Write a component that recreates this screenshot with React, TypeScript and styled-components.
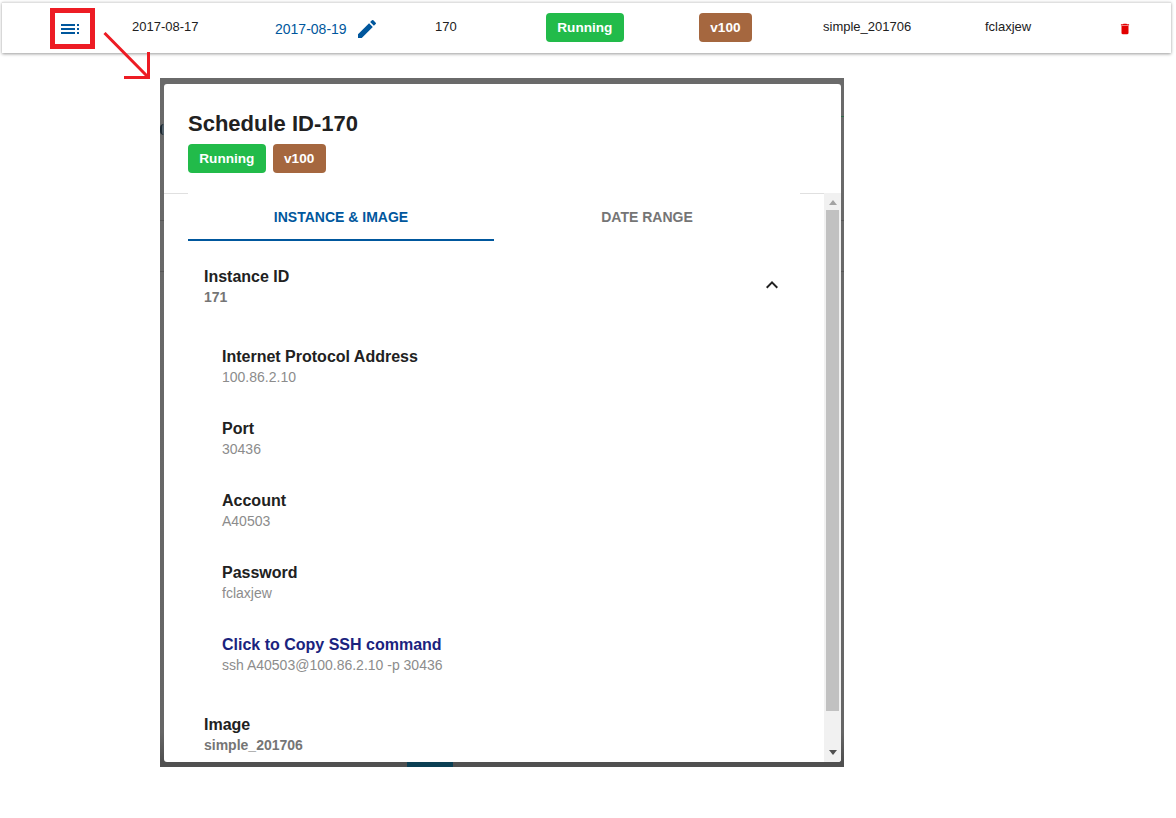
import styled, { createGlobalStyle } from 'styled-components';
import { MdToc, MdEdit, MdDelete, MdExpandLess } from 'react-icons/md';

const GlobalStyle = createGlobalStyle`
  html, body {
    margin: 0;
    padding: 0;
    background: #fff;
    font-family: "Liberation Sans", Arial, sans-serif;
  }
`;

const connectionFields = [
  { label: 'Internet Protocol Address', value: '100.86.2.10' },
  { label: 'Port', value: '30436' },
  { label: 'Account', value: 'A40503' },
  { label: 'Password', value: 'fclaxjew' },
];

export default function App() {
  return (
    <>
      <GlobalStyle />
      <Page>
        <ScheduleRow>
          <MenuCell>
            <MenuButton>
              <MdToc size={24} />
            </MenuButton>
          </MenuCell>
          <RowText>2017-08-17</RowText>
          <EndDate>
            2017-08-19
            <MdEdit size={24} />
          </EndDate>
          <RowText>170</RowText>
          <BadgeCell>
            <Badge $color="#22bb4a">Running</Badge>
          </BadgeCell>
          <BadgeCell>
            <Badge $color="#a5673f">v100</Badge>
          </BadgeCell>
          <RowText>simple_201706</RowText>
          <RowText>fclaxjew</RowText>
          <DeleteCell>
            <MdDelete size={14} />
          </DeleteCell>
        </ScheduleRow>

        <Arrow width="50" height="50" viewBox="0 0 50 50">
          <path d="M1.5 1 L45 45 M21 45.5 H45.5 V20" />
        </Arrow>

        <Modal>
          {/* bits of the page behind the dialog that show through its frame */}
          <BehindArc />
          <BehindButton />
          <FrameTick $side="left" $top={142} />
          <FrameTick $side="left" $top={193} />
          <FrameTick $side="right" $top={38} $color="#2f6b4a" />
          <FrameTick $side="right" $top={142} />
          <FrameTick $side="right" $top={193} />
          <ModalSheet>
            <ModalHeader>
              <ModalTitle>Schedule ID-170</ModalTitle>
              <BadgeRow>
                <Badge $color="#22bb4a">Running</Badge>
                <Badge $color="#a5673f">v100</Badge>
              </BadgeRow>
            </ModalHeader>
            <ModalBody>
              <ModalContent>
                <Tabs>
                  <Tab $active>INSTANCE &amp; IMAGE</Tab>
                  <Tab>DATE RANGE</Tab>
                </Tabs>
                <AccordionHead>
                  <div>
                    <HeadLabel>Instance ID</HeadLabel>
                    <HeadValue>171</HeadValue>
                  </div>
                  <MdExpandLess size={24} />
                </AccordionHead>
                <FieldList>
                  {connectionFields.map((field) => (
                    <div key={field.label}>
                      <FieldLabel>{field.label}</FieldLabel>
                      <FieldValue>{field.value}</FieldValue>
                    </div>
                  ))}
                  <div>
                    <FieldLabel $link>Click to Copy SSH command</FieldLabel>
                    <FieldValue>ssh A40503@100.86.2.10 -p 30436</FieldValue>
                  </div>
                </FieldList>
                <ImageItem>
                  <HeadLabel>Image</HeadLabel>
                  <HeadValue>simple_201706</HeadValue>
                </ImageItem>
              </ModalContent>
              <ScrollBar>
                <ScrollUp />
                <ScrollThumb />
                <ScrollDown />
              </ScrollBar>
            </ModalBody>
          </ModalSheet>
        </Modal>
      </Page>
    </>
  );
}

const Page = styled.div`
  position: relative;
  height: 818px;
  overflow: hidden;
  padding-top: 2px;
  box-sizing: border-box;
`;

const ScheduleRow = styled.div`
  display: grid;
  grid-template-columns: 130px 143px 160px 111px 153px 124px 162px 133px 1fr;
  align-items: center;
  height: 51px;
  box-sizing: border-box;
  margin: 0 5px 0 2px;
  border-top: 1px solid #e0e0e0;
  background: #fff;
  box-shadow: 0 1px 3px rgba(0, 0, 0, 0.4);
  color: #212121;
  font-size: 13px;
`;

const MenuCell = styled.div`
  padding-left: 48px;
`;

const MenuButton = styled.div`
  display: flex;
  align-items: center;
  justify-content: center;
  width: 45px;
  height: 41px;
  box-sizing: border-box;
  padding: 1px 5px 0 0;
  border: 5px solid #ed1c24;
  color: #00579d;
`;

const RowText = styled.div`
  padding-bottom: 3px;
`;

const EndDate = styled.div`
  display: flex;
  align-items: center;
  gap: 8px;
  padding-top: 2px;
  color: #00579d;
  font-size: 14px;
`;

const BadgeCell = styled.div`
  display: flex;
  padding-bottom: 1px;
`;

const DeleteCell = styled.div`
  display: flex;
  padding-top: 2px;
  color: #e30000;
`;

const Badge = styled.span<{ $color: string }>`
  display: inline-block;
  height: 29px;
  padding: 0 11.3px;
  border-radius: 4px;
  background: ${(props) => props.$color};
  color: #fff;
  font-size: 13.6px;
  font-weight: 700;
  line-height: 29px;
`;

const Arrow = styled.svg`
  position: absolute;
  top: 32px;
  left: 103px;
  fill: none;
  stroke: #ed1c24;
  stroke-width: 3;
`;

const Modal = styled.div`
  position: absolute;
  top: 78px;
  left: 160px;
  display: flex;
  width: 684px;
  height: 689px;
  box-sizing: border-box;
  padding: 6px 3px 5px 4px;
  background: linear-gradient(#6a6a6a, #666 95%, #505050 99%);
`;

const ModalSheet = styled.div`
  display: flex;
  flex: 1;
  flex-direction: column;
  position: relative;
  overflow: hidden;
  border-radius: 3px;
  background: #fff;
`;

const ModalHeader = styled.div`
  height: 110px;
  box-sizing: border-box;
  padding: 27px 24px 0;
  border-bottom: 1px solid #e0e0e0;
`;

const ModalTitle = styled.div`
  color: #212121;
  font-size: 22px;
  font-weight: 700;
  line-height: 26px;
`;

const BadgeRow = styled.div`
  display: flex;
  gap: 7px;
  margin-top: 7px;
`;

const ModalBody = styled.div`
  display: flex;
  flex: 1;
  min-height: 0;
`;

const ModalContent = styled.div`
  flex: 1;
  overflow: hidden;
  margin-top: -1px;
  padding: 0 24px;
`;

const Tabs = styled.div`
  display: grid;
  grid-template-columns: 1fr 1fr;
  background: #fff;
`;

const Tab = styled.div<{ $active?: boolean }>`
  height: 48px;
  box-sizing: border-box;
  border-bottom: 2px solid ${(props) => (props.$active ? '#00579d' : 'transparent')};
  color: ${(props) => (props.$active ? '#00579d' : '#757575')};
  font-size: 14px;
  font-weight: 700;
  line-height: 48px;
  text-align: center;
`;

const AccordionHead = styled.div`
  display: flex;
  align-items: flex-start;
  justify-content: space-between;
  padding: 26px 16px 0;
  color: #212121;

  svg {
    margin-top: 6px;
  }
`;

const HeadLabel = styled.div`
  color: #212121;
  font-size: 16px;
  font-weight: 700;
  line-height: 20px;
`;

const HeadValue = styled.div`
  margin-top: 1px;
  color: #757575;
  font-size: 14px;
  font-weight: 700;
  line-height: 18px;
`;

const FieldList = styled.div`
  display: flex;
  flex-direction: column;
  gap: 33px;
  padding: 41px 34px 0;
`;

const FieldLabel = styled.div<{ $link?: boolean }>`
  color: ${(props) => (props.$link ? '#1a237e' : '#212121')};
  font-size: 16px;
  font-weight: 700;
  line-height: 20px;
`;

const FieldValue = styled.div`
  margin-top: 1px;
  color: #8c8c8c;
  font-size: 14px;
  line-height: 18px;
`;

const ImageItem = styled.div`
  padding: 41px 16px 0;
`;

const ScrollBar = styled.div`
  display: flex;
  flex-direction: column;
  width: 17px;
  margin-top: -1px;
  background: #f1f1f1;
`;

const ScrollThumb = styled.div`
  height: 501px;
  margin: 0 2px;
  background: #c1c1c1;
`;

const ScrollUp = styled.div`
  width: 0;
  height: 0;
  margin: 7px auto 5px;
  border: 4px solid transparent;
  border-top: 0;
  border-bottom: 5px solid #a3a3a3;
`;

const ScrollDown = styled.div`
  width: 0;
  height: 0;
  margin: auto auto 7px;
  border: 4px solid transparent;
  border-bottom: 0;
  border-top: 5px solid #505050;
`;

const BehindButton = styled.div`
  position: absolute;
  left: 247px;
  bottom: 0;
  width: 46px;
  height: 5px;
  background: #0b3f54;
`;

const BehindArc = styled.div`
  position: absolute;
  top: 46px;
  left: 0;
  width: 4px;
  height: 11px;
  box-sizing: border-box;
  border-left: 2px solid #1e2a33;
  border-radius: 4px 0 0 4px;
  background: #56636c;
`;

const FrameTick = styled.div<{ $side: 'left' | 'right'; $top: number; $color?: string }>`
  position: absolute;
  top: ${(props) => props.$top}px;
  ${(props) => props.$side}: 0;
  width: ${(props) => (props.$side === 'left' ? '4px' : '3px')};
  height: 1px;
  background: ${(props) => props.$color ?? '#575757'};
`;
